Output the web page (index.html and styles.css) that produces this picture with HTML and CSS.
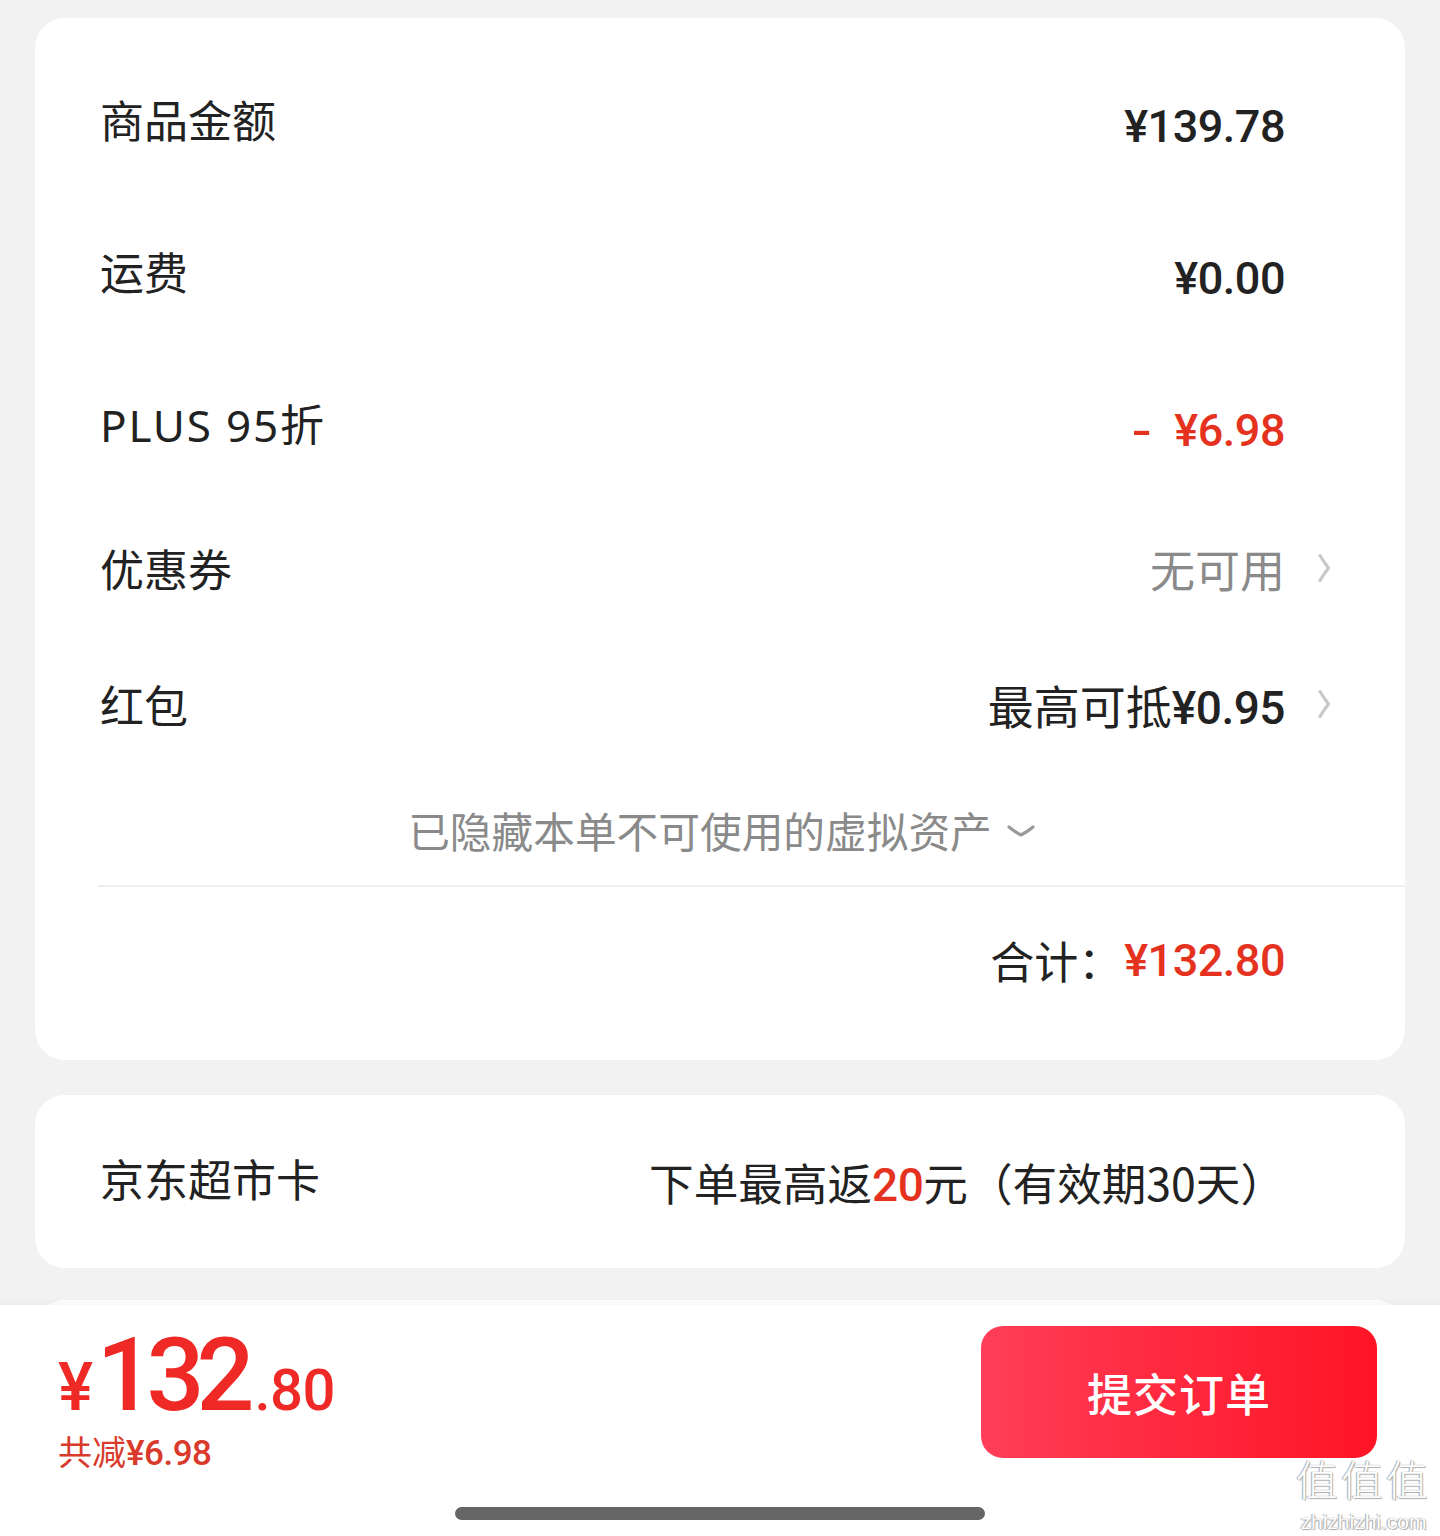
FILE: index.html
```html
<!DOCTYPE html>
<html lang="zh-CN">
<head>
<meta charset="utf-8">
<title>订单结算</title>
<link rel="stylesheet" href="styles.css">
</head>
<body>
<div class="page">
  <main class="content">
    <section class="card summary">
      <div class="row r1">
        <span class="label">商品金额</span>
        <span class="value num">¥139.78</span>
      </div>
      <div class="row r2">
        <span class="label">运费</span>
        <span class="value num">¥0.00</span>
      </div>
      <div class="row r3">
        <span class="label latin">PLUS 95折</span>
        <span class="value num red"><span class="minus">-</span>¥6.98</span>
      </div>
      <div class="row r4">
        <span class="label">优惠券</span>
        <span class="value muted">无可用</span>
        <svg class="chev" viewBox="0 0 14 30" width="14" height="30"><path d="M3 2.5 Q7 9 11.5 15 Q7 21 3 27.5" fill="none" stroke="#c8c8c8" stroke-width="3.2" stroke-linecap="round" stroke-linejoin="round"/></svg>
      </div>
      <div class="row r5">
        <span class="label">红包</span>
        <span class="value">最高可抵<span class="num">¥0.95</span></span>
        <svg class="chev" viewBox="0 0 14 30" width="14" height="30"><path d="M3 2.5 Q7 9 11.5 15 Q7 21 3 27.5" fill="none" stroke="#c8c8c8" stroke-width="3.2" stroke-linecap="round" stroke-linejoin="round"/></svg>
      </div>
      <div class="hidden-row">
        <span class="hidden-text">已隐藏本单不可使用的虚拟资产</span>
        <svg class="chev-down" viewBox="0 0 30 14" width="30" height="14"><path d="M3 3 Q9 8 15 11 Q21 8 27 3" fill="none" stroke="#999" stroke-width="3.2" stroke-linecap="round" stroke-linejoin="round"/></svg>
      </div>
      <div class="divider"></div>
      <div class="total-row">
        <span class="total-label">合计：</span>
        <span class="num red total-value">¥132.80</span>
      </div>
    </section>

    <section class="card market">
      <span class="label">京东超市卡</span>
      <span class="market-text">下单最高返<span class="num red">20</span>元（有效期30天）</span>
    </section>

    <section class="card peek"></section>
  </main>

  <footer class="bar">
    <div class="bar-main">
      <div class="pay">
        <div class="pay-price num"><span class="yen">¥</span><span class="int">132</span><span class="dec">.80</span></div>
        <div class="pay-save">共减<span class="num">¥6.98</span></div>
      </div>
      <button class="submit">提交订单</button>
    </div>
    <div class="home-indicator"></div>
    <div class="watermark">
      <div class="wm-big">值值值</div>
      <div class="wm-small">zhizhizhi.com</div>
    </div>
  </footer>
</div>
</body>
</html>
```

FILE: styles.css
```css
* { box-sizing: border-box; }

html, body {
  margin: 0;
  padding: 0;
  background: #f2f2f2;
}

body {
  font-family: "Noto Sans", "Noto Sans CJK SC", sans-serif;
  color: #222;
}

.page {
  width: 1440px;
  height: 1536px;
  display: flex;
  flex-direction: column;
  overflow: hidden;
}

.content {
  flex: 1;
  overflow: hidden;
  padding: 18px 35px 0;
  display: flex;
  flex-direction: column;
  gap: 35px;
}

.card {
  background: #fff;
  border-radius: 30px;
  flex-shrink: 0;
}

.summary {
  padding: 29px 0 27px;
}

.row {
  display: flex;
  align-items: center;
  padding: 0 120px 0 65px;
}

.r1, .r2, .r3 { height: 152px; }
.r4 { height: 130px; }
.r5 { height: 142px; }

.label {
  font-family: "Noto Sans CJK SC", sans-serif;
  font-size: 44px;
  font-weight: 400;
  color: #222;
  flex: 1;
  margin-top: -8px;
}

.label.latin {
  font-family: "Noto Sans", "Noto Sans CJK SC", sans-serif;
  font-size: 44px;
  letter-spacing: 1.8px;
}

.r4 .label, .r5 .label { margin-top: 0; }

.value {
  font-family: "Noto Sans CJK SC", sans-serif;
  font-size: 45px;
  color: #222;
}

.num {
  font-family: "Roboto", "Noto Sans", sans-serif;
  font-weight: 500;
  letter-spacing: -0.5px;
}

.value.num {
  font-size: 45px;
}

.r1 .value, .r2 .value, .r3 .value { margin-top: 6px; }

.minus {
  display: inline-block;
  margin-right: 26px;
  transform: scaleX(1.3);
}

.r5 .value { font-size: 46px; }
.r5 .value .num { font-size: 46px; }

.red { color: #e4321f; }

.muted { color: #8a8a8a; }

.chev {
  flex-shrink: 0;
  margin-left: 32px;
  margin-right: -46px;
}

.hidden-row {
  height: 110px;
  display: flex;
  align-items: center;
  justify-content: center;
  gap: 14px;
  padding-left: 4px;
}

.hidden-text {
  font-family: "Noto Sans CJK SC", sans-serif;
  font-size: 41.7px;
  color: #8a8a8a;
}

.chev-down { margin-top: 2px; }

.divider {
  height: 2px;
  background: #eeeeee;
  margin-left: 63px;
}

.total-row {
  height: 146px;
  display: flex;
  align-items: center;
  justify-content: flex-end;
  padding-right: 120px;
}

.total-label {
  font-family: "Noto Sans CJK SC", sans-serif;
  font-size: 44px;
  color: #222;
}

.total-value {
  font-size: 45px;
  margin-left: 2px;
}

.market {
  height: 173px;
  display: flex;
  align-items: center;
  padding: 0 120px 0 65px;
}

.market-text {
  font-family: "Noto Sans CJK SC", sans-serif;
  font-size: 44.6px;
  color: #222;
}

.market-text .num {
  font-size: 46px;
}

.peek {
  height: 60px;
  margin-top: -3px;
}

.bar {
  position: relative;
  height: 231px;
  background: #fff;
  box-shadow: 0 -2px 6px rgba(0, 0, 0, 0.04);
  flex-shrink: 0;
}

.bar-main {
  display: flex;
  justify-content: space-between;
  align-items: flex-start;
  padding: 21px 63px 0 58px;
}

.pay {
  display: flex;
  flex-direction: column;
  padding-top: 7px;
}

.pay-price {
  color: #ef2a26;
  line-height: 84px;
  height: 84px;
  white-space: nowrap;
}

.pay-price .yen {
  font-size: 66px;
  font-weight: 500;
  margin-right: 4px;
}

.pay-price .int {
  font-size: 102px;
  letter-spacing: -8px;
  font-weight: 500;
}

.pay-price .dec {
  font-size: 58px;
  font-weight: 500;
  margin-left: 8px;
}

.pay-save {
  font-family: "Noto Sans CJK SC", sans-serif;
  font-size: 34px;
  color: #d93a2b;
  margin-top: 17px;
  line-height: 34px;
  height: 34px;
}

.pay-save .num {
  font-size: 35px;
}

.submit {
  width: 396px;
  height: 132px;
  border: none;
  border-radius: 22px;
  background: linear-gradient(90deg, #ff3e58 0%, #ff2a40 45%, #ff1426 100%);
  color: #fff;
  font-family: "Noto Sans CJK SC", sans-serif;
  font-size: 45px;
  font-weight: 500;
  letter-spacing: 1px;
  padding: 0;
}

.home-indicator {
  width: 530px;
  height: 13px;
  border-radius: 7px;
  background: #666;
  margin: 39px auto 0;
}

.watermark {
  position: absolute;
  right: 9px;
  bottom: 2px;
  display: flex;
  flex-direction: column;
  align-items: center;
  color: #fff;
  text-shadow: 0 0 1px #9a9a9a, 1px 1px 1px #b0b0b0, -1px 0 1px #b0b0b0;
}

.wm-big {
  font-family: "Noto Sans CJK SC", sans-serif;
  font-size: 42px;
  line-height: 48px;
  height: 48px;
  font-weight: 300;
  letter-spacing: 3px;
}

.wm-small {
  font-family: "Liberation Sans", sans-serif;
  font-size: 21px;
  line-height: 24px;
  height: 24px;
  margin-top: 8px;
}
```
